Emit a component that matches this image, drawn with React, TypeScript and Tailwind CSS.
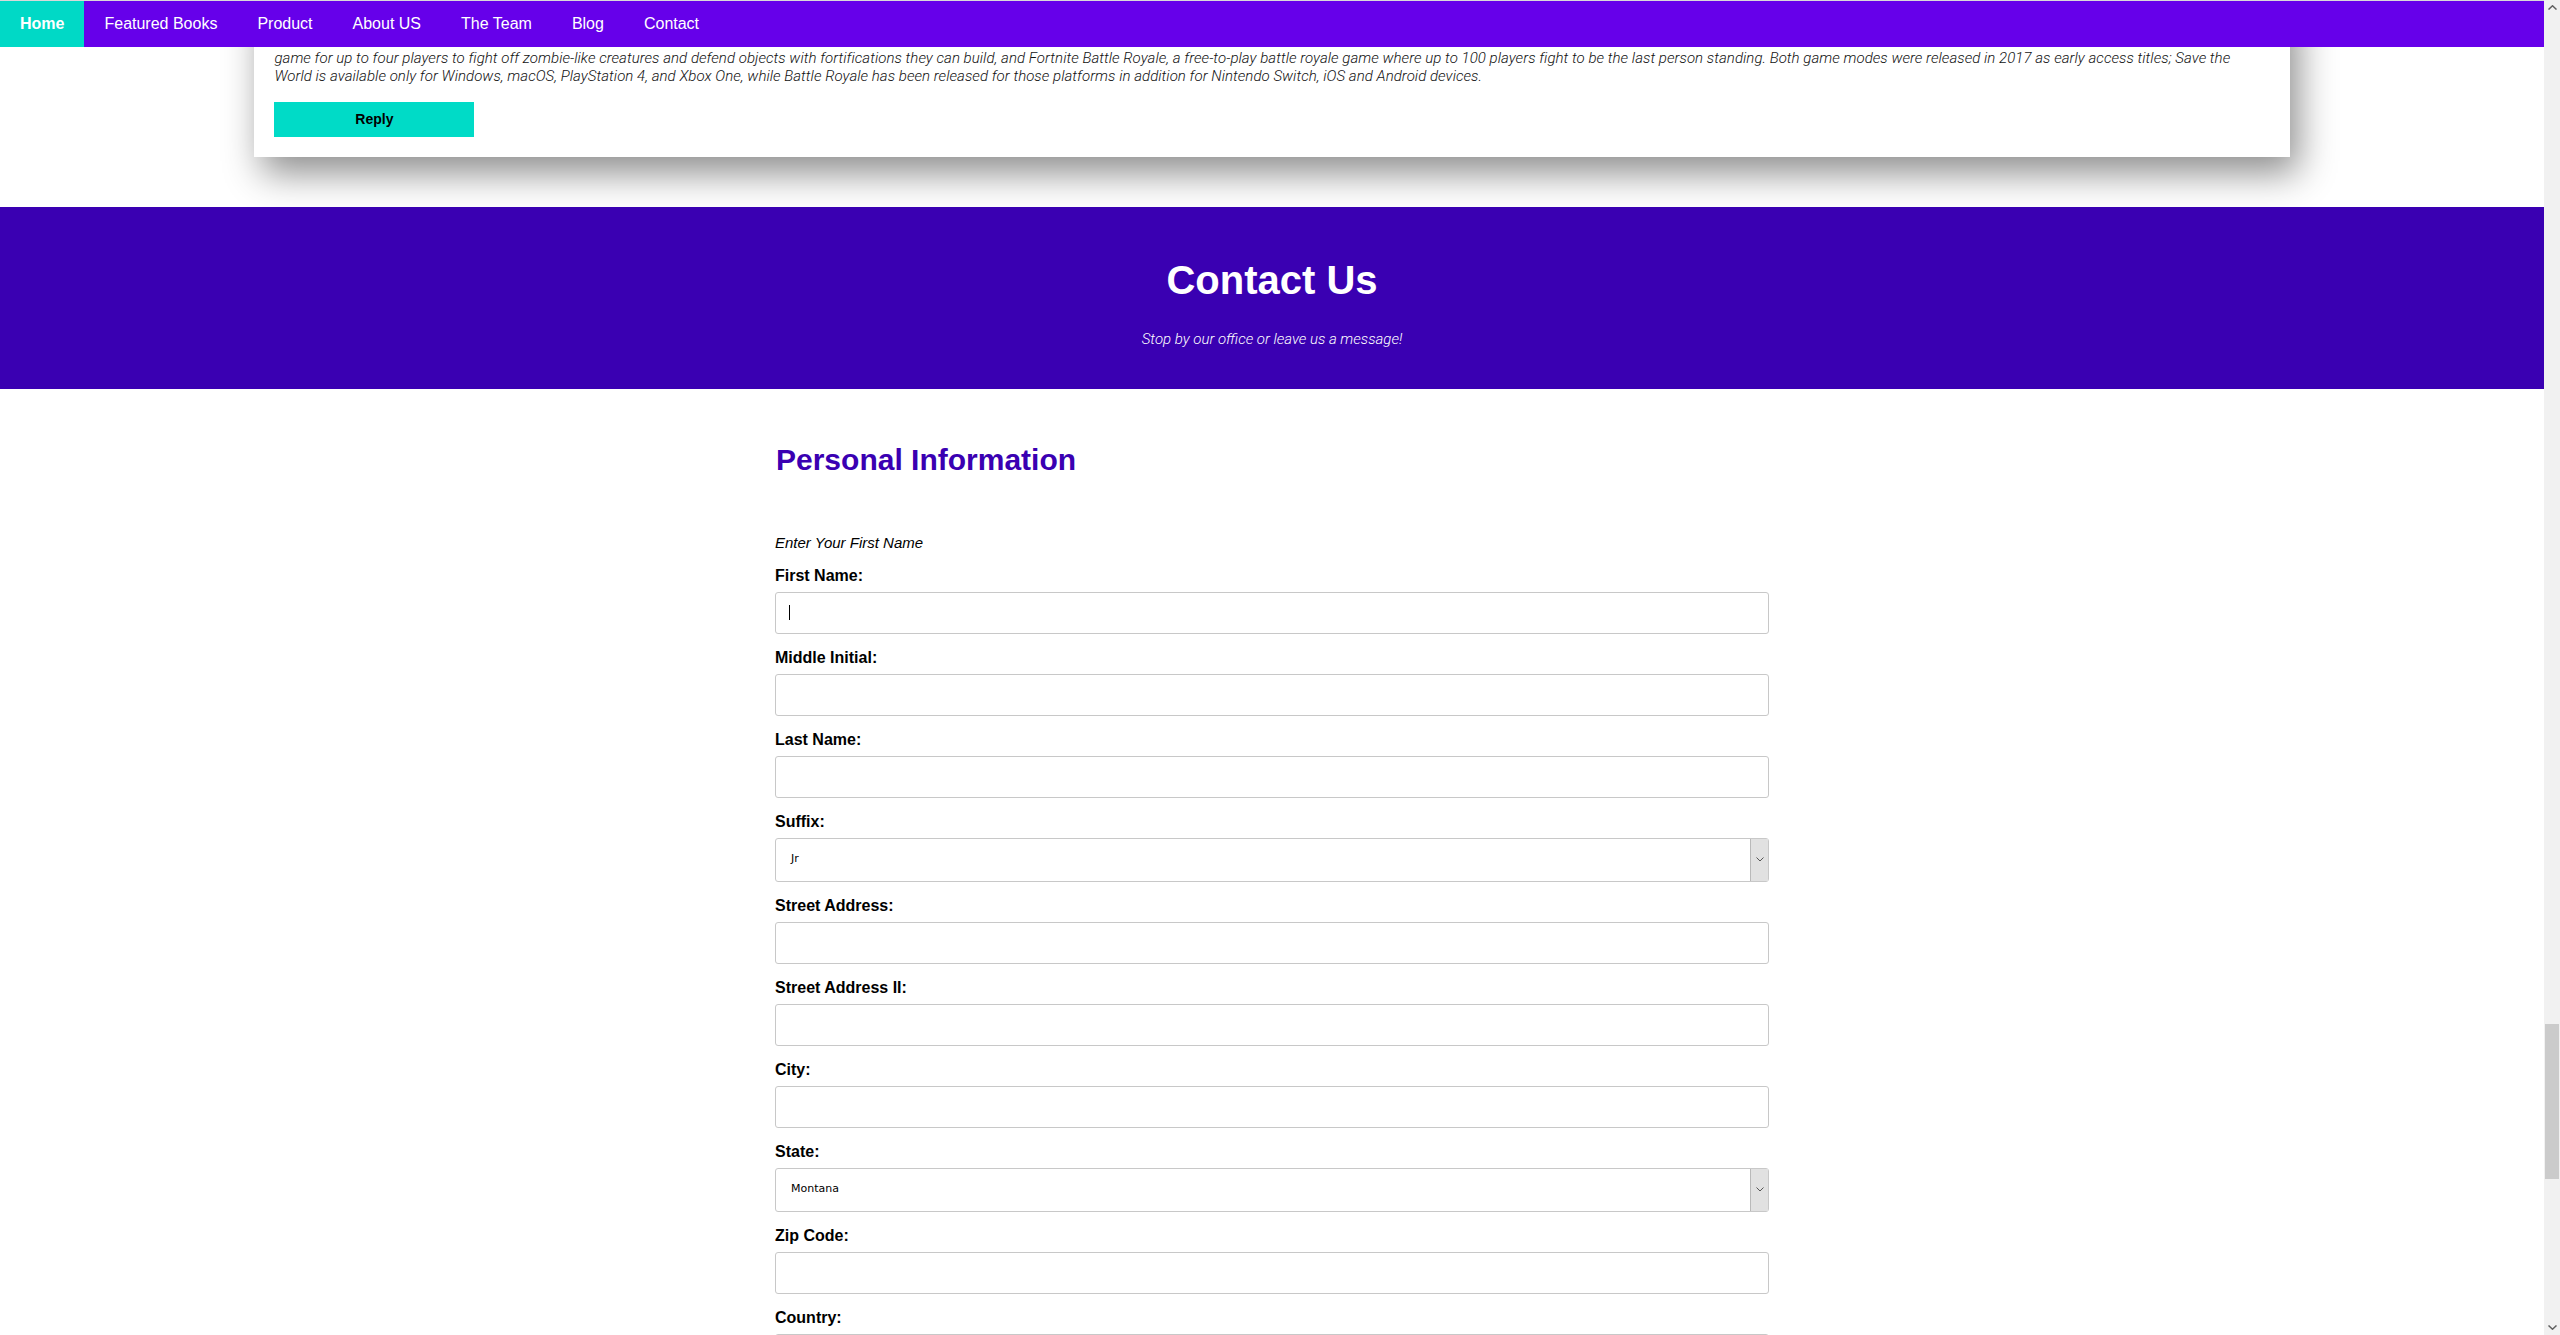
// contact page, scrolled down to the personal information form
import React from "react";

const navLinks = ["Home", "Featured Books", "Product", "About US", "The Team", "Blog", "Contact"];

interface Field {
  label: string;
  kind: "input" | "select";
  value?: string;
}

const fields: Field[] = [
  { label: "First Name:", kind: "input" },
  { label: "Middle Initial:", kind: "input" },
  { label: "Last Name:", kind: "input" },
  { label: "Suffix:", kind: "select", value: "Jr" },
  { label: "Street Address:", kind: "input" },
  { label: "Street Address II:", kind: "input" },
  { label: "City:", kind: "input" },
  { label: "State:", kind: "select", value: "Montana" },
  { label: "Zip Code:", kind: "input" },
  { label: "Country:", kind: "input" },
];

// the fake select box with the grey dropdown button
const SelectBox = ({ value }: { value: string }) => (
  <div className="flex h-[44px] w-full items-stretch rounded-[3px] border border-[#c8c8c8] bg-white">
    <span className="flex flex-1 items-center pl-[15px] font-['DejaVu_Sans',sans-serif] text-[11px] text-black">
      {value}
    </span>
    <span className="flex w-[18px] items-center justify-center border-l border-[#b9b9b9] bg-[#e1e1e1]">
      <svg width="8" height="5" viewBox="0 0 8 5" fill="none">
        <path d="M0.5 0.5 L4 4 L7.5 0.5" stroke="#555" strokeWidth="1" />
      </svg>
    </span>
  </div>
);

const App = () => {
  return (
    <div className="flex h-[1335px] w-full overflow-hidden bg-white">
      <div className="relative flex-1 overflow-hidden">
        {/* fixed nav bar */}
        <nav className="absolute inset-x-0 top-0 z-10 flex h-[47px] border-t border-[#d9d9d9] bg-[#6600ea] font-['Liberation_Sans',Arial,sans-serif] text-[16px] text-white">
          {navLinks.map((link, i) => (
            <a
              key={link}
              href="#"
              className={
                i === 0
                  ? "flex items-center bg-[#00d9c6] px-5 font-bold"
                  : "flex items-center px-5"
              }
            >
              {link}
            </a>
          ))}
        </nav>

        {/* comment card, top part scrolled under the nav */}
        <div className="mx-auto w-[80%] bg-white px-5 pb-5 pt-[30px] shadow-[8px_16px_35px_rgba(0,0,0,0.45)]">
          <div className="font-['Roboto',sans-serif] text-[15px] font-light italic leading-[18.5px] tracking-[0.05px] text-[#111]">
            <div className="overflow-hidden whitespace-nowrap">
              Fortnite is an online video game developed by Epic Games and released in 2017. It is available in three distinct game mode versions that otherwise share the same general gameplay and game engine: Fortnite: Save the World, a cooperative hybrid tower defense-shooter survival
            </div>
            <div className="overflow-hidden whitespace-nowrap">
              game for up to four players to fight off zombie-like creatures and defend objects with fortifications they can build, and Fortnite Battle Royale, a free-to-play battle royale game where up to 100 players fight to be the last person standing. Both game modes were released in 2017 as early access titles; Save the
            </div>
            <div className="overflow-hidden whitespace-nowrap">
              World is available only for Windows, macOS, PlayStation 4, and Xbox One, while Battle Royale has been released for those platforms in addition for Nintendo Switch, iOS and Android devices.
            </div>
          </div>
          <button
            type="button"
            className="mt-4 h-[35px] w-[200px] bg-[#00dbc7] font-['Liberation_Sans',Arial,sans-serif] text-[14px] font-bold text-black"
          >
            Reply
          </button>
        </div>

        {/* contact banner */}
        <section className="mt-[50px] flex h-[182px] flex-col items-center bg-[#3a00b2] pt-[50px] text-white">
          <h1 className="font-['Liberation_Sans',Arial,sans-serif] text-[40px] font-bold leading-[46px]">
            Contact Us
          </h1>
          <p className="mt-[28px] font-['Roboto',sans-serif] text-[15px] font-light italic leading-[16px]">
            Stop by our office or leave us a message!
          </p>
        </section>

        {/* personal information form */}
        <form className="mx-auto w-[994px] font-['Liberation_Sans',Arial,sans-serif]">
          <h2 className="ml-px mt-[53px] text-[30px] font-bold leading-[36px] text-[#3a00b2]">
            Personal Information
          </h2>
          <p className="mt-[56px] text-[15px] italic leading-[18px] text-black">
            Enter Your First Name
          </p>
          <div className="mt-[15px] flex flex-col">
            {fields.map((field, i) => (
              <div key={field.label} className="mb-[15px] flex flex-col">
                <label className="mb-[7px] text-[16px] font-bold leading-[18px] text-black">
                  {field.label}
                </label>
                {field.kind === "select" ? (
                  <SelectBox value={field.value ?? ""} />
                ) : (
                  <div className="relative">
                    <input
                      type="text"
                      className="h-[42px] w-full rounded-[3px] border border-[#c8c8c8] bg-white px-3 outline-none"
                    />
                    {i === 0 && (
                      <span className="absolute left-[14px] top-[13px] h-[15px] w-px bg-black" />
                    )}
                  </div>
                )}
              </div>
            ))}
          </div>
        </form>
      </div>

      {/* scrollbar */}
      <div className="flex w-4 flex-col items-center bg-[#f1f1f1]">
        <svg className="mt-[5px]" width="9" height="5" viewBox="0 0 9 5" fill="none">
          <path d="M0.5 4.5 L4.5 0.8 L8.5 4.5" stroke="#606060" strokeWidth="1.5" />
        </svg>
        <div className="mt-[1014px] h-[155px] w-[14px] bg-[#cbcbcb]" />
        <div className="flex-1" />
        <svg className="mb-[5px]" width="9" height="5" viewBox="0 0 9 5" fill="none">
          <path d="M0.5 0.5 L4.5 4.2 L8.5 0.5" stroke="#606060" strokeWidth="1.5" />
        </svg>
      </div>
    </div>
  );
};

export default App;
